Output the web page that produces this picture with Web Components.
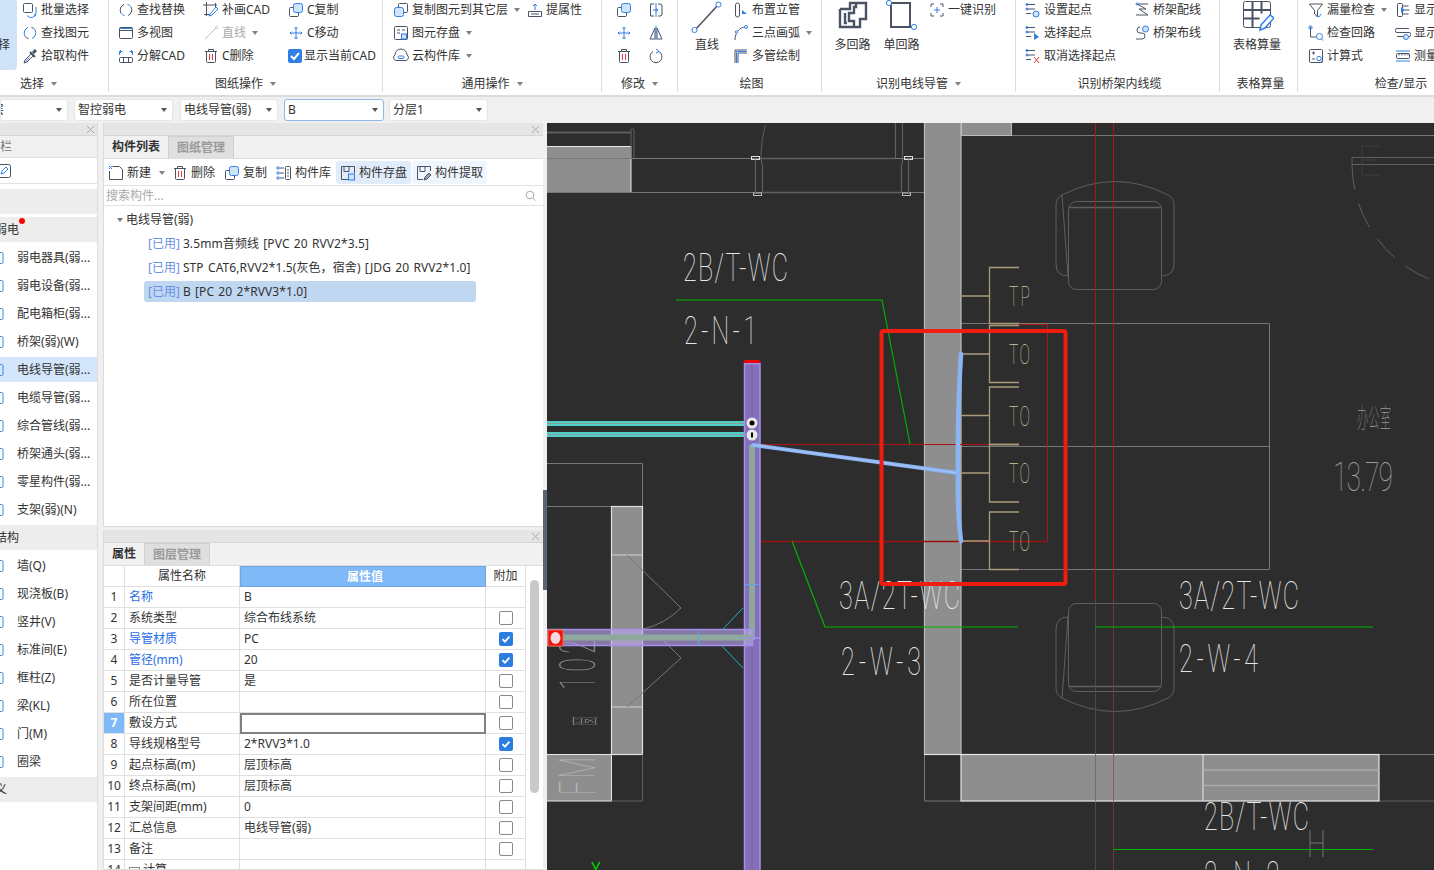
<!DOCTYPE html>
<html lang="zh">
<head>
<meta charset="utf-8">
<title>CAD</title>
<style>
  html, body { margin: 0; height: 100%; overflow: hidden; background: #f0f0f0; }
  body { font: 12px/16px "Noto Sans", "Noto Sans CJK SC", sans-serif; color: #333; }
</style>
</head>
<body>
<app-shell>
  <rb-bar slot="ribbon">
    <rb-group label="选择" caret w="109" labshift="31">
      <rb-sel>择</rb-sel>
      <rb-col w="87" style="margin-left:5px">
        <rb-item icon="batch">批量选择</rb-item>
        <rb-item icon="find">查找图元</rb-item>
        <rb-item icon="pick">拾取构件</rb-item>
      </rb-col>
    </rb-group>
    <rb-group label="图纸操作" caret w="274" pad="9">
      <rb-col w="85">
        <rb-item icon="replace">查找替换</rb-item>
        <rb-item icon="views">多视图</rb-item>
        <rb-item icon="explode">分解CAD</rb-item>
      </rb-col>
      <rb-col w="85">
        <rb-item icon="patch">补画CAD</rb-item>
        <rb-item icon="gline" off caret>直线</rb-item>
        <rb-item icon="trash">C删除</rb-item>
      </rb-col>
      <rb-col w="95">
        <rb-item icon="copy">C复制</rb-item>
        <rb-item icon="move">C移动</rb-item>
        <rb-item icon="checked" tight>显示当前CAD</rb-item>
      </rb-col>
    </rb-group>
    <rb-group label="通用操作" caret w="219" pad="10">
      <rb-col w="134">
        <rb-item icon="copylayer" caret>复制图元到其它层</rb-item>
        <rb-item icon="store" caret>图元存盘</rb-item>
        <rb-item icon="cloud" caret>云构件库</rb-item>
      </rb-col>
      <rb-col w="70">
        <rb-item icon="attr">提属性</rb-item>
      </rb-col>
    </rb-group>
    <rb-group label="修改" caret w="76" pad="14">
      <rb-col w="32">
        <rb-item icon="copy"></rb-item>
        <rb-item icon="move"></rb-item>
        <rb-item icon="trash"></rb-item>
      </rb-col>
      <rb-col w="24">
        <rb-item icon="mirrorbox"></rb-item>
        <rb-item icon="mirror"></rb-item>
        <rb-item icon="rotate"></rb-item>
      </rb-col>
    </rb-group>
    <rb-group label="绘图" w="144" pad="8">
      <rb-big icon="bigline" w="42">直线</rb-big>
      <rb-col w="88" style="margin-left:5px">
        <rb-item icon="riser">布置立管</rb-item>
        <rb-item icon="arc" caret>三点画弧</rb-item>
        <rb-item icon="multipipe">多管绘制</rb-item>
      </rb-col>
    </rb-group>
    <rb-group label="识别电线导管" caret w="194" pad="6">
      <rb-big icon="bigmaze" w="49">多回路</rb-big>
      <rb-big icon="bigloop" w="49">单回路</rb-big>
      <rb-col w="80" style="margin-left:3px">
        <rb-item icon="onekey">一键识别</rb-item>
      </rb-col>
    </rb-group>
    <rb-group label="识别桥架内线缆" w="204" pad="9">
      <rb-col w="109">
        <rb-item icon="setstart">设置起点</rb-item>
        <rb-item icon="selstart">选择起点</rb-item>
        <rb-item icon="delstart">取消选择起点</rb-item>
      </rb-col>
      <rb-col w="80">
        <rb-item icon="trayline">桥架配线</rb-item>
        <rb-item icon="traylay">桥架布线</rb-item>
      </rb-col>
    </rb-group>
    <rb-group label="表格算量" w="78" pad="13">
      <rb-big icon="bigtable" w="48">表格算量</rb-big>
    </rb-group>
    <rb-group label="检查/显示" caret w="220" pad="10" last>
      <rb-col w="87">
        <rb-item icon="leak" caret>漏量检查</rb-item>
        <rb-item icon="loop">检查回路</rb-item>
        <rb-item icon="calc">计算式</rb-item>
      </rb-col>
      <rb-col w="60">
        <rb-item icon="show">显示</rb-item>
        <rb-item icon="show2">显示</rb-item>
        <rb-item icon="measure">测量</rb-item>
      </rb-col>
    </rb-group>
  </rb-bar>

  <drop-bar slot="drops">
    <drop-box w="68"><span style="margin-left:-12px">层</span></drop-box>
    <drop-box w="99">智控弱电</drop-box>
    <drop-box w="98" style="margin-left:1px">电线导管(弱)</drop-box>
    <drop-box w="100" focus>B</drop-box>
    <drop-box w="99" style="margin-left:-1px">分层1</drop-box>
  </drop-bar>

  <nav-panel slot="nav">
    <nav-head blank></nav-head>
    <nav-head dot shift>弱电</nav-head>
    <nav-item>弱电器具(弱...</nav-item>
    <nav-item>弱电设备(弱...</nav-item>
    <nav-item>配电箱柜(弱...</nav-item>
    <nav-item>桥架(弱)(W)</nav-item>
    <nav-item active>电线导管(弱...</nav-item>
    <nav-item>电缆导管(弱...</nav-item>
    <nav-item>综合管线(弱...</nav-item>
    <nav-item>桥架通头(弱...</nav-item>
    <nav-item>零星构件(弱...</nav-item>
    <nav-item>支架(弱)(N)</nav-item>
    <nav-head shift>结构</nav-head>
    <nav-item>墙(Q)</nav-item>
    <nav-item>现浇板(B)</nav-item>
    <nav-item>竖井(V)</nav-item>
    <nav-item>标准间(E)</nav-item>
    <nav-item>框柱(Z)</nav-item>
    <nav-item>梁(KL)</nav-item>
    <nav-item>门(M)</nav-item>
    <nav-item>圈梁</nav-item>
    <nav-head shift>义</nav-head>
  </nav-panel>

  <dock-panel slot="list" tabs="构件列表,图纸管理" tabh="23" style="height:404px">
    <tool-row>
      <tool-btn icon="newdoc" caret>新建</tool-btn>
      <tool-btn icon="trash">删除</tool-btn>
      <tool-btn icon="copy">复制</tool-btn>
      <tool-btn icon="lib">构件库</tool-btn>
      <tool-btn icon="savecomp" state="on">构件存盘</tool-btn>
      <tool-btn icon="pickcomp" state="soft">构件提取</tool-btn>
    </tool-row>
    <search-row>搜索构件...</search-row>
    <comp-tree title-text="电线导管(弱)">
      <comp-line>3.5mm音频线 [PVC 20 RVV2*3.5]</comp-line>
      <comp-line>STP CAT6,RVV2*1.5(灰色，宿舍) [JDG 20 RVV2*1.0]</comp-line>
      <comp-line selected>B [PC 20 2*RVV3*1.0]</comp-line>
    </comp-tree>
  </dock-panel>

  <dock-panel slot="props" tabs="属性,图层管理" tabh="23" style="margin-top:3px;height:340px">
    <prop-table></prop-table>
  </dock-panel>

  <cad-view slot="cad"></cad-view>
</app-shell>

<script>
const S = "#4a5363", B = "#2f7fe6", L = "#cfe3fb", R = "#e23b3b";
const p = (d, c = S, f = "none", w = 1) => `<path d="${d}" stroke="${c}" fill="${f}" stroke-width="${w}"/>`;
const r = (x, y, w, h, c = S, f = "none", rx = 1) => `<rect x="${x}" y="${y}" width="${w}" height="${h}" rx="${rx}" stroke="${c}" fill="${f}"/>`;
const o = (x, y, q, c = S, f = "none") => `<circle cx="${x}" cy="${y}" r="${q}" stroke="${c}" fill="${f}"/>`;
const arrows4 = p("M8 2v12M2 8h12M6.5 3.5L8 2l1.5 1.5M6.5 12.5L8 14l1.5-1.5M3.5 6.5L2 8l1.5 1.5M12.5 6.5L14 8l-1.5 1.5", B);

const ICONS = {
  batch: r(1.5, 1.5, 9, 9) + p("M5 13.5a5 5 0 0 0 9-2V5", B) + p("M12 12.5l2 1.5", B),
  find: p("M3 11A6 6 0 0 1 6 2.5M13 5a6 6 0 0 1-3 8.5", B) + p("M9.5 2.4a6 6 0 0 1 3.5 2.4M6.5 13.6A6 6 0 0 1 3 11.2"),
  replace: p("M3 11A6 6 0 0 1 6 2.5M13 5a6 6 0 0 1-3 8.5", S) + p("M9.5 2.4a6 6 0 0 1 3.5 2.4M6.5 13.6A6 6 0 0 1 3 11.2", B),
  pick: p("M2 15l1-3 6-6 2 2-6 6z") + p("M8 4l5 5", S, "none", 2) + p("M11 5l3-3", S, "none", 3) + p("M3.5 13.5l4-4", B),
  views: r(1.5, 2.5, 13, 11) + p("M1.5 5.5h13M4 2.5h10", S) + p("M1.5 3.5h13", B),
  explode: r(1.5, 9.5, 13, 5) + p("M5.5 9.5v5M10.5 9.5v5") + p("M1.5 7V3.5h3M14.5 7V3.5h-3M3 2L1.5 3.5 3 5M13 2l1.5 1.5L13 5", B),
  patch: p("M3.5 0v14M0 3h14M12.5 1v5M1 12.5h6") + p("M7 12l6-7 2 2-6 6-3 1z", B),
  gline: p("M2 14L13 3", "#bdbdbd") + o(13.5, 2.5, 1, "#bdbdbd"),
  trash: p("M2 3.5h12M5.5 3.5v-2h5v2M3.5 3.5v10a1 1 0 0 0 1 1h7a1 1 0 0 0 1-1v-10") + p("M6.5 6v6M9.5 6v6", R),
  copy: r(1.5, 5.5, 9, 9) + r(5.5, 1.5, 9, 9, B, L, 2),
  copylayer: r(5.5, 1.5, 9, 9) + r(1.5, 5.5, 9, 9, B, L, 2),
  move: arrows4,
  checked: `<rect x="0" y="1" width="14" height="14" rx="2" fill="${B}"/>` + p("M3 8l3 3 5-6", "#fff", "none", 2),
  store: r(1.5, 1.5, 13, 13) + p("M4 5h3M4 8h3M9 5h3") + r(8.5, 9, 5, 5, B, L, 0),
  cloud: p("M3 12.5a3 3 0 0 1-1-5.5 6 6 0 0 1 12 0 3 3 0 0 1-1 5.5z") + r(5, 8, 6, 2.5, B),
  attr: p("M1.5 9.5h13v5h-13zM4 12h8") + p("M8 8V2M6 4l2-2 2 2", B),
  mirrorbox: p("M6 2H2.5v12H6M10 2h2a2 2 0 0 1 2 2v8a2 2 0 0 1-2 2h-2") + p("M8 1v14M5 8h5M8.5 6.5L10 8l-1.5 1.5", B),
  mirror: p("M7 3L2 14h5zM9 3l5 11H9z", S) + p("M8 1v14", B),
  rotate: p("M5 3.5a6 6 0 1 0 6 0") + p("M8 1l3 2.5L8 5", B),
  riser: r(2.5, 1, 4, 14, S, "none", 2) + `<path d="M9 8l5 4H9z" fill="${B}"/>`,
  arc: p("M2 15C2 8 6 2 13 2", S) + o(13, 2, 1.5, B, "#fff") + o(3.5, 7, 1.2, B, "#fff"),
  multipipe: p("M2 15V2h12M5 15V5h9") + p("M3.5 15V3.5h10", B),
  onekey: p("M5 2H2v3M11 2h3v3M5 14H2v-3M11 14h3v-3", S) + p("M8 5v6M5 8h6", B),
  setstart: p("M1 2.5h9M1 7h9M1 11.5h5") + o(2, 2.5, 1, B) + o(2, 7, 1, B) + o(11, 12, 3, B, L),
  selstart: p("M1 2.5h9M1 7h9M1 11.5h5") + o(2, 2.5, 1, B) + o(2, 7, 1, B) + `<path d="M9 8l5 4-5 3z" fill="${B}"/>`,
  delstart: p("M1 2.5h9M1 7h9M1 11.5h5") + o(2, 2.5, 1, B) + o(2, 7, 1, B) + p("M9 9l5 6M14 9l-5 6", R),
  trayline: p("M3 2h11M3 2l9 5H5l9 6H2") + o(3, 2, 1, B),
  traylay: p("M2 14h6a3 3 0 0 0 0-6H6a3 3 0 0 1 0-6") + o(11.5, 4, 3, B, L),
  leak: p("M1.5 2h13L9.5 8.5V14l-3-2V8.5z") + p("M8 14l3 1 2-3", B),
  loop: p("M2.5 2v10h6") + r(1, 1, 3, 3, B) + o(11.5, 11.5, 3, B) + p("M13.5 14l1.5 1.5", B),
  calc: r(1.5, 1.5, 13, 13) + p("M4 5h3M5.5 3.5v3M4 11h3") + o(11, 10.5, 2.2, B) + p("M12.5 12.5l2 2", B),
  show: r(2.5, 1.5, 5, 13) + p("M7.5 4h6M9.5 8h5M7.5 12h6") + `<path d="M6 5l4 3-4 3z" fill="${B}"/>`,
  show2: p("M2 3.5h12M2 7.5h12M2 3.5a2 2 0 0 0 0 4M14 7.5a2 2 0 0 1 0 4H2") + o(11, 12, 2.5, B, L),
  measure: r(1.5, 5.5, 13, 5) + p("M4 5.5v2M7 5.5v2M10 5.5v2M13 5.5v2") + p("M1 3h14M1 13h14", B),
  newdoc: p("M4.5 1.5h7l3 3v10h-13V6") + p("M1 1l3 3M4 1L1 4", B),
  lib: r(9.5, 1.5, 5, 13) + p("M3.5 3H8M3.5 8H8M3.5 13H8M11 5h2M11 8h2M11 11h2") + o(2, 3, 1.2, B) + o(2, 8, 1.2, B) + o(2, 13, 1.2, B),
  savecomp: p("M14.5 8V1.5h-13v13H8M4 1.5v5h5v-5") + r(8.5, 9, 6, 6, B, L, 0),
  pickcomp: p("M14.5 6V1.5h-13v13H7M4 1.5v5h5v-5") + p("M8 15l1-3 4-4 2 2-4 4z", S, "#8fa3bd"),
  bigline: `<svg width="32" height="33" viewBox="0 0 32 33" fill="none">${p("M4 30L27 5", S, "none", 1.5)}${o(3.5, 30, 2.6, B, "#fff")}${o(27.5, 4.5, 2.6, B, "#fff")}</svg>`,
  bigmaze: `<svg width="32" height="32" viewBox="0 0 32 32" fill="none">${p("M3 9h10v-6h6M3 9v18h14v-6h-5V13h5V7h2v-4M8 13v10h2M19 3h10v16h-6v8h-6", S, "none", 2.4)}</svg>`,
  bigloop: `<svg width="36" height="31" viewBox="0 0 36 31" fill="none">${p("M7 3h19v24H7V3", S, "none", 2)}${o(5, 3, 2.6, B, "#fff")}${o(30, 27, 2.6, B, "#fff")}</svg>`,
  bigtable: `<svg width="34" height="34" viewBox="0 0 34 34" fill="none">${r(3.5, 1.5, 27, 26, S, "none", 2)}${p("M3.5 10h27M3.5 18.5h16M12.5 1.5v26M21.5 1.5v12", S, "none", 2)}${p("M20 30l1-5 9-10 4 3-9 10z", B, "#fff", 1.5)}</svg>`
};
const icon = name => {
  const body = ICONS[name] || "";
  return body.startsWith("<svg") ? body : `<svg width="16" height="16" viewBox="0 0 16 16" fill="none">${body}</svg>`;
};
const CARET = `display:inline-block;width:0;height:0;border:3.5px solid transparent;border-top:4px solid #808080;border-bottom:0;`;

class AppShell extends HTMLElement {
  constructor() {
    super();
    this.attachShadow({ mode: "open" }).innerHTML = `
      <style>
        :host { display: grid; grid-template-rows: 97px 26px 747px; width: 1434px; height: 870px; overflow: hidden; }
        .main { display: flex; min-height: 0; }
        .nav { width: 98px; flex: none; }
        .mid { width: 440px; flex: none; margin-left: 5px; display: flex; flex-direction: column; }
        .split { width: 4px; flex: none; position: relative; }
        .split i { position: absolute; left: 0; top: 367px; width: 4px; height: 100px; background: #5a6472; }
        .cad { flex: 1; min-width: 0; }
      </style>
      <slot name="ribbon"></slot>
      <slot name="drops"></slot>
      <div class="main">
        <div class="nav"><slot name="nav"></slot></div>
        <div class="mid"><slot name="list"></slot><slot name="props"></slot></div>
        <div class="split"><i></i></div>
        <div class="cad"><slot name="cad"></slot></div>
      </div>`;
  }
}
class RbBar extends HTMLElement {
  constructor() {
    super();
    this.attachShadow({ mode: "open" }).innerHTML = `
      <style>
        :host { display: flex; height: 95px; background: #fff; border-bottom: 2px solid #dcdcdc; overflow: hidden; white-space: nowrap; }
      </style><slot></slot>`;
  }
}
class RbGroup extends HTMLElement {
  constructor() {
    super();
    const w = this.getAttribute("w"), pad = this.getAttribute("pad") || 0;
    const label = this.getAttribute("label"), caret = this.hasAttribute("caret");
    this.attachShadow({ mode: "open" }).innerHTML = `
      <style>
        :host { display: flex; flex-direction: column; flex: none; width: ${w}px; height: 92px; box-sizing: border-box;
                border-right: 1px solid ${this.hasAttribute("last") ? "transparent" : "#dedede"}; }
        .body { flex: none; height: 75px; display: flex; padding-left: ${pad}px; }
        .lab { flex: 1; display: flex; justify-content: center; align-items: center; gap: 7px; color: #333;
               padding: 0 ${this.getAttribute("labshift") || 0}px 0 ${caret ? 0 : 4}px; }
        .caret { ${CARET} }
      </style>
      <div class="body"><slot></slot></div>
      <div class="lab">${label}${caret ? '<i class="caret"></i>' : ""}</div>`;
  }
}
class RbSel extends HTMLElement {
  constructor() {
    super();
    this.attachShadow({ mode: "open" }).innerHTML = `
      <style>
        :host { display: flex; align-items: center; justify-content: flex-end; flex: none; width: 17px; height: 70px; overflow: hidden;
                background: #cfe2f7; border-radius: 0 0 4px 0; color: #333; }
        span { margin-top: 20px; margin-right: 7px; flex: none; }
      </style><span><slot></slot></span>`;
  }
}
class RbCol extends HTMLElement {
  constructor() {
    super();
    this.attachShadow({ mode: "open" }).innerHTML = `
      <style>
        :host { display: flex; flex-direction: column; flex: none; width: ${this.getAttribute("w")}px; margin-top: -2px; }
      </style><slot></slot>`;
  }
}
class RbItem extends HTMLElement {
  constructor() {
    super();
    const off = this.hasAttribute("off");
    this.attachShadow({ mode: "open" }).innerHTML = `
      <style>
        :host { display: flex; align-items: center; height: 23px; gap: ${this.hasAttribute("tight") ? 0 : 3}px; color: ${off ? "#aaa" : "#333"}; }
        svg { display: block; flex: none; }
        .caret { ${CARET} margin-left: 3px; }
      </style>
      ${icon(this.getAttribute("icon"))}<slot></slot>${this.hasAttribute("caret") ? '<i class="caret"></i>' : ""}`;
  }
}
class RbBig extends HTMLElement {
  constructor() {
    super();
    this.attachShadow({ mode: "open" }).innerHTML = `
      <style>
        :host { display: flex; flex-direction: column; align-items: center; flex: none; width: ${this.getAttribute("w")}px; }
        .i { height: 37px; display: flex; align-items: flex-start; }
        span { line-height: 16px; }
      </style>
      <div class="i">${icon(this.getAttribute("icon"))}</div><span><slot></slot></span>`;
  }
}
class DropBar extends HTMLElement {
  constructor() {
    super();
    this.attachShadow({ mode: "open" }).innerHTML = `
      <style>
        :host { display: flex; gap: 6px; align-items: center; height: 26px; background: #f0f0f0; overflow: hidden; }
      </style><slot></slot>`;
  }
}
class DropBox extends HTMLElement {
  constructor() {
    super();
    const focus = this.hasAttribute("focus");
    this.attachShadow({ mode: "open" }).innerHTML = `
      <style>
        :host { display: flex; align-items: center; flex: none; box-sizing: border-box; width: ${this.getAttribute("w")}px; height: 22px; padding: 0 4px 1px 3px;
                background: #fff; border: 1px solid ${focus ? "#8fb8ea" : "#e6e6e6"}; border-radius: 3px; color: #333; overflow: hidden; }
        span { flex: 1; white-space: nowrap; }
        i { ${CARET} border-top-color: #555; margin-right: 1px; }
      </style><span><slot></slot></span><i></i>`;
  }
}
class NavPanel extends HTMLElement {
  constructor() {
    super();
    this.attachShadow({ mode: "open" }).innerHTML = `
      <style>
        :host { display: block; height: 747px; box-sizing: border-box; background: #fff; border-right: 1px solid #dcdcdc; overflow: hidden; }
        .bar { height: 12px; background: #e5e5e5; border-bottom: 1px solid #d6d6d6; display: flex; justify-content: flex-end; padding-right: 2px; align-items: center; }
        .tab { height: 21px; background: #f0f0f0; color: #777; line-height: 21px; }
        .tool { height: 27px; box-sizing: border-box; background: #fff; border-top: 1px solid #e2e2e2; border-bottom: 1px solid #e2e2e2; overflow: hidden; position: relative; }
        .tool svg { display: block; margin: 5px 0 0 -4px; }
        .list { display: flex; flex-direction: column; gap: 3px; padding-top: 5px; }
      </style>
      <div class="bar"><svg width="9" height="9" viewBox="0 0 9 9"><path d="M1 1l7 7M8 1L1 8" stroke="#a8a8a8" fill="none"/></svg></div>
      <div class="tab">栏</div>
      <div class="tool"><svg width="16" height="16" viewBox="0 0 16 16" fill="none"><rect x="1.5" y="1.5" width="13" height="13" rx="2" stroke="#4a5363"/><path d="M5 11l1-3 4-4 2 2-4 4z" stroke="#2f7fe6"/></svg></div>
      <div class="list"><slot></slot></div>`;
  }
}
class NavHead extends HTMLElement {
  constructor() {
    super();
    this.attachShadow({ mode: "open" }).innerHTML = `
      <style>
        :host { display: flex; align-items: center; height: 25px; background: #ededed; color: #333; position: relative; }
        span { margin-left: ${this.hasAttribute("shift") ? -5 : 0}px; white-space: nowrap; }
        i { position: absolute; left: 19px; top: 1px; width: 6px; height: 6px; border-radius: 50%; background: #f00; }
      </style><span><slot></slot></span>${this.hasAttribute("dot") ? "<i></i>" : ""}`;
  }
}
class NavItem extends HTMLElement {
  constructor() {
    super();
    this.attachShadow({ mode: "open" }).innerHTML = `
      <style>
        :host { display: flex; align-items: center; height: 25px; color: #333; white-space: nowrap; overflow: hidden; }
        :host([active]) { background: #d4e6fb; }
        .clip { width: 4px; height: 14px; margin-right: 13px; overflow: hidden; flex: none; display: flex; justify-content: flex-end; }
      </style>
      <div class="clip"><svg width="12" height="14" viewBox="0 0 12 14" fill="none" style="flex:none"><rect x="1.5" y="1.5" width="9.5" height="11" rx="1.5" stroke="#3d86e4"/></svg></div><slot></slot>`;
  }
}
class DockPanel extends HTMLElement {
  constructor() {
    super();
    const tabs = this.getAttribute("tabs").split(",");
    this.attachShadow({ mode: "open" }).innerHTML = `
      <style>
        :host { display: flex; flex-direction: column; box-sizing: border-box; background: #fff; border: 1px solid #dcdcdc; border-width: 0 0 1px 1px; flex: none; overflow: hidden; }
        .bar { flex: none; height: 12px; background: #e5e5e5; border-bottom: 1px solid #d6d6d6; display: flex; justify-content: flex-end; align-items: center; padding-right: 3px; }
        .tabs { flex: none; height: ${this.getAttribute("tabh")}px; background: #f1f1f1; display: flex; border-bottom: 1px solid #dedede; box-sizing: border-box; }
        .t { padding: 0 8px; font-weight: 700; color: #333; line-height: 22px; box-sizing: border-box; border-right: 1px solid #d0d0d0; }
        .t + .t { background: #dfdfdf; color: #9a9a9a; border: 1px solid #d0d0d0; border-width: 1px 1px 0 0; }
        .body { flex: 1; min-height: 0; display: flex; flex-direction: column; }
      </style>
      <div class="bar"><svg width="9" height="9" viewBox="0 0 9 9"><path d="M1 1l7 7M8 1L1 8" stroke="#a8a8a8" fill="none"/></svg></div>
      <div class="tabs">${tabs.map(t => `<div class="t">${t}</div>`).join("")}</div>
      <div class="body"><slot></slot></div>`;
  }
}
class ToolRow extends HTMLElement {
  constructor() {
    super();
    this.attachShadow({ mode: "open" }).innerHTML = `
      <style>
        :host { display: flex; align-items: center; gap: 1px; height: 27px; padding-top: 1px; flex: none; box-sizing: border-box; border-bottom: 1px solid #e2e2e2; white-space: nowrap; }
      </style><slot></slot>`;
  }
}
class ToolBtn extends HTMLElement {
  constructor() {
    super();
    const state = this.getAttribute("state");
    const bg = state === "on" ? "#e0ecfa" : state === "soft" ? "#f0f6fd" : "transparent";
    this.attachShadow({ mode: "open" }).innerHTML = `
      <style>
        :host { display: flex; align-items: center; gap: 3px; height: 23px; padding: 0 4px; background: ${bg}; border-radius: 3px; color: #333; }
        svg { display: block; flex: none; }
        i { ${CARET} margin: 0 -2px 0 5px; }
      </style>${icon(this.getAttribute("icon"))}<slot></slot>${this.hasAttribute("caret") ? "<i></i>" : ""}`;
  }
}
class SearchRow extends HTMLElement {
  constructor() {
    super();
    this.attachShadow({ mode: "open" }).innerHTML = `
      <style>
        :host { display: flex; align-items: center; justify-content: space-between; flex: none; height: 20px; box-sizing: border-box; padding: 0 7px 0 2px; color: #aaa; border-bottom: 1px solid #e2e2e2; }
        svg { display: block; }
      </style>
      <span><slot></slot></span>
      <svg width="11" height="11" viewBox="0 0 11 11" fill="none"><circle cx="5" cy="5" r="3.8" stroke="#aaa"/><path d="M8 8l2.5 2.5" stroke="#aaa"/></svg>`;
  }
}
class CompTree extends HTMLElement {
  constructor() {
    super();
    this.attachShadow({ mode: "open" }).innerHTML = `
      <style>
        :host { display: block; padding-top: 2px; }
        .root { display: flex; align-items: center; height: 24px; padding-left: 13px; gap: 3px; color: #333; }
        i { ${CARET} border-top-color: #777; }
        .kids { display: flex; flex-direction: column; }
      </style>
      <div class="root"><i></i>${this.getAttribute("title-text")}</div>
      <div class="kids"><slot></slot></div>`;
  }
}
class CompLine extends HTMLElement {
  constructor() {
    super();
    this.attachShadow({ mode: "open" }).innerHTML = `
      <style>
        :host { display: block; height: 24px; padding-left: 40px; }
        .r { display: flex; align-items: center; height: 21px; margin-top: 1px; width: ${this.hasAttribute("selected") ? "332px" : "auto"}; border-radius: 3px;
             background: ${this.hasAttribute("selected") ? "#bfd7f0" : "transparent"}; padding-left: 4px; box-sizing: border-box; white-space: pre; }
        b { font-weight: 400; color: #6a8fe6; margin-right: 3px; }
        span { letter-spacing: .1px; word-spacing: 1px; }
      </style>
      <div class="r"><b>[已用]</b><span><slot></slot></span></div>`;
  }
}
const PROPS = [
  ["名称", "B", null, 1], ["系统类型", "综合布线系统", 0], ["导管材质", "PC", 1, 1], ["管径(mm)", "20", 1, 1],
  ["是否计量导管", "是", 0], ["所在位置", "", 0], ["敷设方式", "", 0], ["导线规格型号", "2*RVV3*1.0", 1],
  ["起点标高(m)", "层顶标高", 0], ["终点标高(m)", "层顶标高", 0], ["支架间距(mm)", "0", 0],
  ["汇总信息", "电线导管(弱)", 0], ["备注", "", 0], ["计算", "", null]
];
class PropTable extends HTMLElement {
  constructor() {
    super();
    const rows = PROPS.map((row, i) => {
      const n = i + 1;
      const box = row[2] === null ? "" : row[2]
        ? `<span class="cb on"><svg width="14" height="14" viewBox="0 0 14 14"><path d="M3.5 7.2l2.4 2.4 4.6-5" stroke="#fff" stroke-width="1.8" fill="none"/></svg></span>`
        : `<span class="cb"></span>`;
      const name = n === 14 ? `<span class="fold"></span>&nbsp;${row[0]}` : row[0];
      return `<div class="c idx${n === 7 ? " cur" : ""}">${n}</div>
        <div class="c nm${row[3] ? " blue" : ""}">${name}</div>
        <div class="c val${n === 7 ? " edit" : ""}">${row[1]}</div>
        <div class="c add">${box}</div>`;
    }).join("");
    this.attachShadow({ mode: "open" }).innerHTML = `
      <style>
        :host { display: flex; flex: none; height: 305px; overflow: hidden; }
        .g { display: grid; grid-template-columns: 21px 115px 246px 40px; grid-auto-rows: 21px; width: 422px; flex: none; align-content: start; }
        .c { box-sizing: border-box; border: 1px solid #e0e0e0; border-width: 0 1px 1px 0; display: flex; align-items: center; white-space: nowrap; overflow: hidden; color: #333; }
        .h { justify-content: center; height: 21px; }
        .h.val { background: #7fb9f8; color: #fff; border: 1px solid #6ea6e4; font-weight: 700; }
        .idx { justify-content: center; }
        .cur { background: #7fb9f8; color: #fff; font-weight: 700; }
        .nm, .val { padding-left: 4px; }
        .blue { color: #2a6ee8; }
        .edit { border: 2px solid #808080; background: #fff; }
        .add { justify-content: center; }
        .cb { display: block; box-sizing: border-box; width: 14px; height: 14px; border: 1px solid #888; border-radius: 2px; background: #fff; }
        .cb.on { background: #2b7de0; border: 0; }
        .cb svg { display: block; }
        .fold { display: inline-block; width: 9px; height: 9px; border: 1px solid #888; margin-top: 5px; }
        .sb { flex: 1; position: relative; }
        .sb i { position: absolute; left: 4px; top: 14px; width: 9px; height: 213px; border-radius: 5px; background: #c8c8c8; }
      </style>
      <div class="g">
        <div class="c h"></div><div class="c h">属性名称</div><div class="c h val">属性值</div><div class="c h">附加</div>
        ${rows}
      </div>
      <div class="sb"><i></i></div>`;
  }
}
// helper for the drawing: narrow glyphs spread to the width the text has on the plan
const T = (s, x, y, w, size, c = "#e6e6e6", sx = .66, extra = "") =>
  `<text transform="translate(${x} ${y}) scale(${sx} 1)" font-size="${size}" textLength="${(w / sx).toFixed(1)}" lengthAdjust="spacing" fill="${c}" ${extra}>${s}</text>`;
const line = (d, c, w = 1, extra = "") => `<path d="${d}" stroke="${c}" stroke-width="${w}" fill="none" ${extra}/>`;
const box = (x, y, w, h, f, s, sw = 1) => `<rect x="${x}" y="${y}" width="${w}" height="${h}" fill="${f}" stroke="${s}" stroke-width="${sw}"/>`;

class CadView extends HTMLElement {
  constructor() {
    super();
    const GREY = "#8e8e8e", G2 = "#777", G3 = "#5f5f5f", TAN = "#a89c7a", RED = "#b01414", GRN = "#00b400";
    const bracket = (top, bot, stub, txt) =>
      line(`M1019 ${top}H989.5V${bot}H1019M961 ${stub}H989.5`, TAN, 1.3) + T(txt, 1009, stub + 10, 21, 27, "#d2c69e", .58);
    const chairTop = line("M1062 195Q1115 168 1168 195Q1174 198 1174 205V264Q1174 276 1161 276M1068 276Q1056 276 1056 264V205Q1056 198 1062 195Z", G3, 1)
      + `<rect x="1068.5" y="201.5" width="93" height="88" rx="8" fill="none" stroke="${G3}"/>` + line("M1069 207.5H1161", G3, 1.5);
    const chairBot = line("M1062 698Q1115 725 1168 698Q1174 695 1174 688V629Q1174 617 1161 617M1068 617Q1056 617 1056 629V688Q1056 695 1062 698Z", G3, 1)
      + `<rect x="1068.5" y="603.5" width="93" height="88" rx="8" fill="none" stroke="${G3}"/>` + line("M1069 686.5H1161", G3, 1.5);
    const svg = `
      <svg width="887" height="747" viewBox="547 123 887 747" xmlns="http://www.w3.org/2000/svg" font-family="Roboto, 'Noto Sans CJK SC', sans-serif" font-weight="100">
        <rect x="547" y="123" width="887" height="747" fill="#2d2d2d"/>

        <!-- upper wall and door openings -->
        ${box(540, 146.5, 91, 46, GREY, "#e8e8e8")}
        ${line("M547 132.5H631", G3, 2)}
        ${line("M631 158.5V129H634V158.5", G3)}
        ${line("M547 158.5H924M547 192.5H924", G2)}
        ${line("M759 158.5H895M762 192.5H901", G3, 1.5)}
        ${box(751.5, 156.5, 8, 3, "none", "#ddd")}${box(753.5, 193, 8, 2.5, "none", "#bbb")}
        ${box(904.5, 156.5, 8, 3, "none", "#ddd")}${box(902.5, 193, 8, 2.5, "none", "#bbb")}
        ${line("M755.5 159.5V193M762.5 166V193M761 158L762.5 166M908.5 159.5V193M901.5 166V193M903 158L901.5 166", G3, 1.2)}
        ${line("M765.5 125Q761 140 761 158", G3)}
        ${line("M895.5 123V158M902.5 123V158", G3, 1.2)}

        <!-- room lines -->
        ${line("M1012 135.5H1434", G2)}
        ${box(961.5, 120, 50, 15.5, GREY, "#bbb")}
        ${line("M961 323.5H1269.5V569.5H961M961 446.5H1269.5", G2)}

        <!-- door arc top right -->
        ${line("M1352 164.5V157.5H1434M1352 164.5H1434", G3, 1)}
        ${line("M1352 164A125 125 0 0 0 1434 281", G3, 1, 'stroke-dasharray="26 14"')}
        ${line("M1380 146H1362V175H1380M1362 160H1380", "#3e3e3e", 1)}
        ${chairTop}${chairBot}

        <!-- thin red lines -->
        ${line("M1095.5 123V600M1113.5 123V600", RED)}
        ${line("M1095.5 600V870", "#4b4b4b")}${line("M1113.5 600V870", "#6c3a3a")}
        ${line("M1019 324.5H1047.5V541", RED)}

        <!-- wall column -->
        ${box(924.5, 120, 36.5, 634.5, GREY, "#bdbdbd", 1.2)}
        ${line("M761 444.5H989", RED)}
        ${line("M755 541.5H1047", "#9a1212", 1.4)}

        <!-- lower walls -->
        ${line("M924.5 754.5V801H961M1379 754.5H1434", G2)}
        ${line("M1379 801H1434", G3)}
        ${box(961, 754.5, 418, 46.5, GREY, "#e8e8e8", 1.2)}
        ${line("M1203 754.5V801", "#e8e8e8")}${line("M1203 770H1379M1203 785.5H1379", "#aaa", 1.5)}
        ${line("M924 754.5H961", "#e8e8e8")}
        ${line("M1095.5 754V801", "#6f6f6f")}${line("M1113.5 754V801", "#8a5a5a")}
        ${line("M1310 830V857M1323 830V857M1310 843H1323", G2)}

        <!-- left block -->
        ${line("M547 463.5H642.5V506", G2)}
        ${line("M547 506.5H611", G2)}
        ${box(611.5, 506.5, 31, 248, GREY, "#e0e0e0", 1.2)}
        ${line("M612 555H642M612 707H642", "#bdbdbd", 1.5)}
        ${line("M627 555L681 608Q665 624 643 629M658 635L681 658L627 707", G2)}
        ${box(540, 754.5, 71.5, 46.5, GREY, "#e8e8e8")}
        ${line("M611.5 801H642.5V754.5", G3)}
        <g transform="translate(595 690) rotate(-90)">${T("102", 0, 0, 50, 50, "#8a8a8a", .5)}</g>
        <g transform="translate(595 726) rotate(-90)">${T("窗", 0, 0, 10, 30, "#9a9a9a", .33)}</g>
        <g transform="translate(595 795) rotate(-90)">${T("FM", 0, 0, 38, 50, "#b8b8b8", .5)}</g>

        <!-- leader lines -->
        ${line("M676 300H882L910 444", GRN, 1.2)}
        ${line("M792 541L825 627H1018", GRN, 1.2)}
        ${line("M1095 627H1373", GRN, 1.2)}
        ${line("M1113 849.5H1373", GRN, 1.2)}

        <!-- socket symbols -->
        ${bracket(267.5, 323.5, 296, "TP")}
        ${bracket(325.5, 382.5, 354, "TO")}
        ${bracket(387, 444.5, 415.5, "TO")}
        ${bracket(444.5, 502, 473, "TO")}
        ${bracket(512, 569.5, 541, "TO")}

        <!-- plan texts -->
        ${T("2B/T-WC", 683, 281, 105, 38)}
        ${T("2-N-1", 684, 344, 73, 38)}
        ${T("3A/2T-WC", 839, 609, 121, 38)}
        ${T("2-W-3", 841, 675, 80, 38)}
        ${T("3A/2T-WC", 1179, 609, 120, 38)}
        ${T("2-W-4", 1179, 672, 79, 38)}
        ${T("2B/T-WC", 1204, 830, 105, 38)}
        ${T("2-N-2", 1204, 889, 76, 38)}
        ${T("办公室", 1357, 428, 34, 27, "#999", .42)}
        ${T("13.79", 1333, 491, 60, 40, "#999")}
        ${T("Y", 591, 874, 10, 16, "#00d000", 1, 'font-weight="400"')}

        <!-- teal cables -->
        ${line("M547 423.5H746M547 434.5H746", "#4fd0c8", 5)}
        ${line("M547 423.5H746M547 434.5H746", "#8a9b99", 1)}

        <!-- vertical conduit -->
        <rect x="744.5" y="363.5" width="15.5" height="510" fill="#8470b6" stroke="#a68ff0" stroke-width="1.5"/>
        <rect x="744" y="360" width="16" height="3" fill="#f00000"/>
        ${line("M752 364V870", "#7462a8", 1)}
        ${line("M752 445V640", "#8fa89e", 6)}
        ${line("M745 584.5H759", "#5aa8e0", 1)}

        <!-- horizontal conduit -->
        <rect x="547" y="629.5" width="205.5" height="16" fill="#b8a8ee" fill-opacity=".62" stroke="#a68ff0" stroke-width="1.5"/>
        ${line("M560 637.5H752", "#8fa89e", 6)}
        ${line("M698.5 630V646", "#5aa8e0", 1)}
        ${line("M722 630L743 608M722 646L743 668", "#20b0c0", 1)}
        ${line("M744 638H760", "#a68ff0", 1.5)}
        <rect x="548" y="630" width="15" height="16" rx="1" fill="#f01010" stroke="#f07040"/>
        <ellipse cx="555.5" cy="638" rx="5" ry="6" fill="#f6d8dc"/>

        <!-- node markers -->
        <circle cx="752" cy="423" r="5.5" fill="#e8e8e8"/><circle cx="752" cy="423" r="2.5" fill="#000"/>
        <circle cx="752" cy="435" r="5.5" fill="#e8e8e8"/><rect x="751" y="432.5" width="2" height="5" fill="#000"/>

        <!-- blue run -->
        ${line("M753 445L958 473", "#8ab4f4", 4, 'stroke-linecap="round"')}
        ${line("M753 445L958 473", "#a9c6f5", 1)}
        ${line("M961 354Q957 420 958 473Q957 510 961 541", "#8ab4f4", 4.5, 'stroke-linecap="round"')}

        <!-- selection box -->
        <rect x="881.5" y="331" width="184" height="253" rx="2" fill="none" stroke="#f01c10" stroke-width="4"/>
      </svg>`;
    this.attachShadow({ mode: "open" }).innerHTML = `
      <style>
        :host { display: block; width: 887px; height: 747px; overflow: hidden; background: #2d2d2d; }
        svg { display: block; }
      </style>${svg}`;
  }
}
customElements.define("app-shell", AppShell);
customElements.define("rb-bar", RbBar);
customElements.define("rb-group", RbGroup);
customElements.define("rb-sel", RbSel);
customElements.define("rb-col", RbCol);
customElements.define("rb-item", RbItem);
customElements.define("rb-big", RbBig);
customElements.define("drop-bar", DropBar);
customElements.define("drop-box", DropBox);
customElements.define("nav-panel", NavPanel);
customElements.define("nav-head", NavHead);
customElements.define("nav-item", NavItem);
customElements.define("dock-panel", DockPanel);
customElements.define("tool-row", ToolRow);
customElements.define("tool-btn", ToolBtn);
customElements.define("search-row", SearchRow);
customElements.define("comp-tree", CompTree);
customElements.define("comp-line", CompLine);
customElements.define("prop-table", PropTable);
customElements.define("cad-view", CadView);
</script>
</body>
</html>
